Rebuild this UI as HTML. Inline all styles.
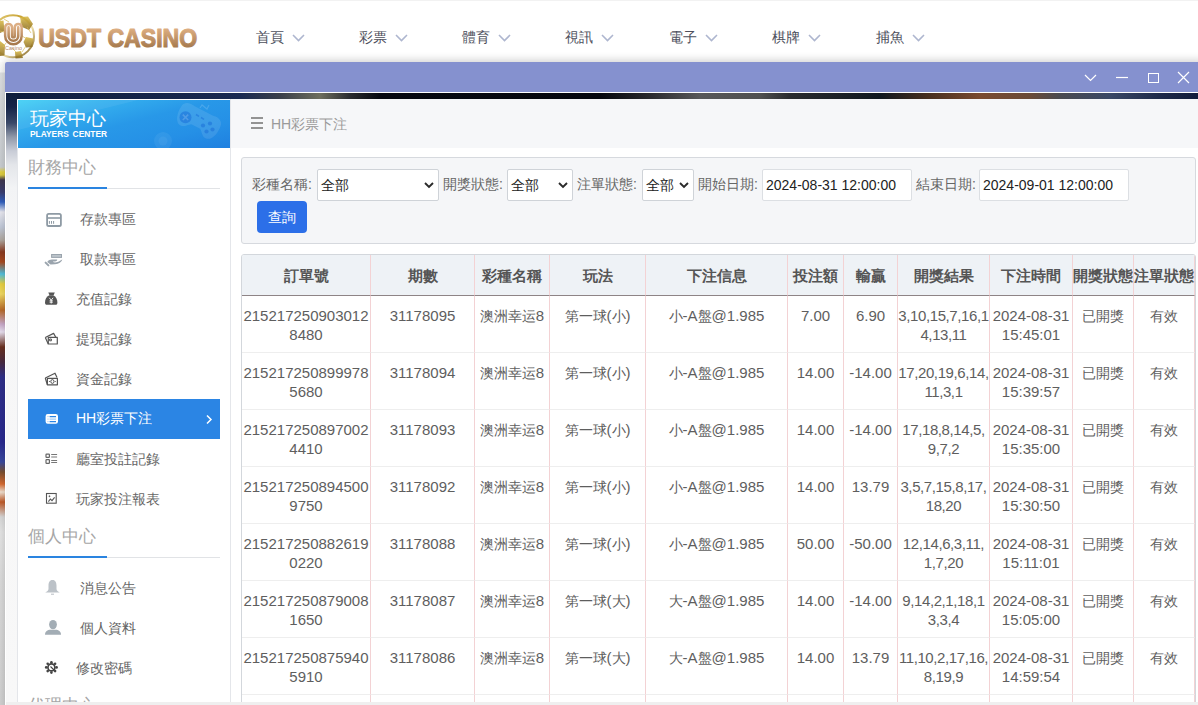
<!DOCTYPE html>
<html><head><meta charset="utf-8">
<style>
*{box-sizing:border-box;margin:0;padding:0}
html,body{width:1198px;height:705px;overflow:hidden;background:#fff;font-family:"Liberation Sans",sans-serif;color:#555}
.abs{position:absolute}
#topline{left:0;top:0;width:1198px;height:1px;background:#f2f2f2}
#logo-text-unused{left:37px;top:21px;font-weight:bold;font-size:24px;letter-spacing:-0.45px;line-height:32px;white-space:nowrap;
 background:linear-gradient(180deg,#dcae84 0%,#c99a6e 50%,#a97c50 100%);-webkit-background-clip:text;background-clip:text;color:transparent}
.nav{top:27px;font-size:14px;line-height:20px;color:#4d4f5c;white-space:nowrap}
.nav svg{position:absolute;left:36px;top:7px}
/* page left strip */
#pagebg{left:0;top:62px;width:6px;height:643px;background:linear-gradient(180deg,#fcfcfc 0,#f4f4f4 10px,#dcdee0 11px,#d0d3d6 60px,#c8ccd0 105px,#e0d040 110px,#d8c840 113px,#403850 118px,#3a3e70 130px,#3060c0 140px,#e8e8f0 150px,#c0c8d8 165px,#b0a8a0 178px,#8a3a20 190px,#a84a20 200px,#50c0e0 212px,#e8d040 222px,#f0d860 232px,#b86a28 248px,#c8a8c8 262px,#e8e0f0 270px,#6a3020 285px,#4a2a40 300px,#30308a 315px,#2a2a90 380px,#3a4aa0 400px,#7a5030 410px,#d86a30 422px,#f0e0d0 430px,#c05a28 440px,#d8d8d8 455px,#e4e4e4 470px,#dadada 520px,#d0d0d0 643px)}
#modal{left:5px;top:62px;width:1200px;height:650px;background:#fff;border-radius:2px 0 0 0;box-shadow:0 -2px 8px rgba(0,0,0,.18)}
#titlebar{left:0;top:0;width:1200px;height:30px;background:#8591cf;border-radius:2px 0 0 0}
#tbline{left:0;top:30px;width:1200px;height:1px;background:#fff}
#mbody{left:1px;top:31px;width:1199px;height:620px;background:#fff}
#strip{left:0;top:0;width:1199px;height:6px;background:linear-gradient(90deg,#0e1d3c 0px,#1a2a52 234px,#3a3f4a 274px,#6e6e5e 314px,#2a2c30 344px,#060810 374px,#05070e 594px,#2a2a2e 644px,#58585a 694px,#505050 754px,#2a2c30 784px,#101820 874px,#4a3020 924px,#7a4a30 974px,#6a4a38 1024px,#4a4a50 1054px,#3a4866 1104px,#1e2a4a 1154px,#101a38 1199px)}
#leftstrip{left:0;top:0;width:11px;height:620px;background:linear-gradient(180deg,#0e1d3c 0,#152448 14px,#3a4868 30px,#9098a8 44px,#c8ccd6 58px,#e4e6ea 72px,#f2f3f5 95px,#f6f6f7 140px,#f8f8f8 620px)}
#sidebar{left:17px;top:99px;width:214px;height:603px;background:#fff;border-left:1px solid #e4e6ea;border-right:1px solid #e4e6ea}
#sbhead{left:17px;top:99px;width:213px;height:49px;border-top:1px solid #fff;border-left:1px solid #fff;
 background:linear-gradient(165deg,#43d0f5 0%,#36b2ef 22%,#2898e8 50%,#2590e6 75%,#1f80e0 100%)}
.sbtitle{font-size:17px;color:#a6a6a6;line-height:20px;white-space:nowrap}
.sbline{height:1px;background:#e1e3e6}
.sbblue{height:2px;background:#2a84e0}
.mi{font-size:14px;color:#666;line-height:20px;white-space:nowrap}
#active{left:28px;top:399px;width:192px;height:40px;background:#2b85e4}
#crumb{left:231px;top:99px;width:967px;height:49px;background:#f6f7f9}
#filter{left:241px;top:157px;width:955px;height:87px;background:#f5f6f8;border:1px solid #d6d9de;border-radius:3px}
.lbl{top:175px;font-size:14px;line-height:18px;color:#666;white-space:nowrap}
.sel{top:169px;height:32px;background:#fff;border:1px solid #cfd3d8;border-radius:2px;font-size:14px;color:#222}
.sel span{position:absolute;left:3px;top:6px;line-height:18px}
.sel svg{position:absolute;top:12px}
.inp{top:169px;height:32px;background:#fff;border:1px solid #dcdfe3;border-radius:2px;font-size:14px;color:#222}
.inp span{position:absolute;left:3px;top:7px;line-height:16px;white-space:nowrap}
#btn{left:257px;top:201px;width:50px;height:32px;background:#2c6fe8;border-radius:4px;color:#fff;font-size:14px;line-height:32px;text-align:center}
#tablewrap{left:241px;top:254px;width:955px;height:460px;border:1px solid #d3d7dc;border-radius:3px;overflow:hidden;background:#fff}
table{border-collapse:separate;border-spacing:0;table-layout:fixed;width:953px;position:absolute;left:0;top:0}
th{height:41px;box-sizing:border-box;padding-top:2px !important;background:#eef2f6;font-size:15px;font-weight:bold;color:#555;text-align:center;border-right:1px solid #f3d2d4;border-bottom:1px solid #8e8486;white-space:nowrap;padding:0;overflow:visible}
.c{font-size:14px}
td:nth-child(8){letter-spacing:-0.4px}
td{height:57px;box-sizing:border-box;font-size:15px;color:#5e5e5e;text-align:center;vertical-align:top;border-right:1px solid #f3d2d4;border-bottom:1px solid #eeeeee;padding:10px 0 0 0;line-height:19px;letter-spacing:0;white-space:nowrap}
#bottombar{left:6px;top:702px;width:1192px;height:3px;background:#efefef}
</style></head><body>
<div id="topline" class="abs"></div>
<!-- logo coin -->
<svg class="abs" style="left:0;top:0" width="200" height="62" viewBox="0 0 200 62">
 <defs>
  <linearGradient id="gold" x1="0" y1="0" x2="1" y2="1"><stop offset="0" stop-color="#e8d58a"/><stop offset=".35" stop-color="#c8a232"/><stop offset=".6" stop-color="#f4e6b0"/><stop offset="1" stop-color="#7a5a18"/></linearGradient>
  <linearGradient id="gold2" x1="0" y1="0" x2="0" y2="1"><stop offset="0" stop-color="#d9b840"/><stop offset="1" stop-color="#8a6a1c"/></linearGradient>
  <linearGradient id="bronze" x1="0" y1="0" x2="0" y2="1"><stop offset="0" stop-color="#dcae84"/><stop offset="1" stop-color="#a87a4e"/></linearGradient>
  <linearGradient id="bronzeT" gradientUnits="userSpaceOnUse" x1="0" y1="29" x2="0" y2="47"><stop offset="0" stop-color="#dcad80"/><stop offset="1" stop-color="#a77b4f"/></linearGradient>
 </defs>
 <circle cx="13" cy="36.3" r="21" fill="#fff" stroke="url(#gold)" stroke-width="2"/>
 <g fill="url(#gold2)" opacity=".85">
  <path d="M20 17 L28 16.5 L33 24 L29 30 L22 27Z"/>
  <path d="M26 37 L33 38.5 L32.5 47 L26 47.5 L23.5 42Z"/>
  <path d="M0 41 L5 45 L4.5 55.5 L0 56Z"/>
  <path d="M15 52 L21 51 L23 58 L15.5 58.5Z"/>
  <path d="M0 21 L3.5 20.5 L4.5 31 L0 33Z"/>
 </g>
 <g fill="none" stroke="#d8bc5a" stroke-width=".9" opacity=".8">
  <path d="M4 19 L9 22 M22 18 L20 26 M27 27 L31 33 M27 39 L22 36 M26 46 L22 52 M16 52 L12 48 M3 47 L6 43 M0 31 L4 32"/>
 </g>
 <g fill="none" stroke-linecap="round">
  <path d="M8.6 27.4 V36 A4.8 4.8 0 0 0 18.2 36 V27.4" stroke="url(#bronze)" stroke-width="9.4"/>
  <path d="M8.6 27.4 V36 A4.8 4.8 0 0 0 18.2 36 V27.4" stroke="#fff" stroke-width="4.4"/>
  <path d="M8.6 27.4 V36 A4.8 4.8 0 0 0 18.2 36 V27.4" stroke="url(#bronze)" stroke-width="2.6"/>
 </g>
 <text x="5" y="50" font-size="4.6" fill="#b88c6a" font-family="Liberation Sans" textLength="17" lengthAdjust="spacingAndGlyphs">Casino</text>
 <text x="38.2" y="47" font-family="Liberation Sans" font-weight="bold" font-size="25" textLength="159" lengthAdjust="spacingAndGlyphs" fill="url(#bronzeT)" stroke="url(#bronzeT)" stroke-width="1.1" stroke-linejoin="round">USDT CASINO</text>
</svg>
<!-- nav -->
<div class="abs nav" style="left:256px">首頁<svg width="13" height="8" viewBox="0 0 13 8"><path d="M1 1 L6.5 6.5 L12 1" fill="none" stroke="#aeb6cf" stroke-width="1.6"/></svg></div>
<div class="abs nav" style="left:359px">彩票<svg width="13" height="8" viewBox="0 0 13 8"><path d="M1 1 L6.5 6.5 L12 1" fill="none" stroke="#aeb6cf" stroke-width="1.6"/></svg></div>
<div class="abs nav" style="left:462px">體育<svg width="13" height="8" viewBox="0 0 13 8"><path d="M1 1 L6.5 6.5 L12 1" fill="none" stroke="#aeb6cf" stroke-width="1.6"/></svg></div>
<div class="abs nav" style="left:565px">視訊<svg width="13" height="8" viewBox="0 0 13 8"><path d="M1 1 L6.5 6.5 L12 1" fill="none" stroke="#aeb6cf" stroke-width="1.6"/></svg></div>
<div class="abs nav" style="left:669px">電子<svg width="13" height="8" viewBox="0 0 13 8"><path d="M1 1 L6.5 6.5 L12 1" fill="none" stroke="#aeb6cf" stroke-width="1.6"/></svg></div>
<div class="abs nav" style="left:772px">棋牌<svg width="13" height="8" viewBox="0 0 13 8"><path d="M1 1 L6.5 6.5 L12 1" fill="none" stroke="#aeb6cf" stroke-width="1.6"/></svg></div>
<div class="abs nav" style="left:876px">捕魚<svg width="13" height="8" viewBox="0 0 13 8"><path d="M1 1 L6.5 6.5 L12 1" fill="none" stroke="#aeb6cf" stroke-width="1.6"/></svg></div>

<div id="pagebg" class="abs"></div>
<div id="modal" class="abs">
 <div id="titlebar" class="abs"></div>
 <div id="tbline" class="abs"></div>
 <div id="mbody" class="abs">
  <div id="strip" class="abs"></div>
  <div id="leftstrip" class="abs"></div>
 </div>
 <svg class="abs" style="left:1075px;top:8px" width="120" height="16" viewBox="0 0 120 16">
  <path d="M5 5 L10.5 10.5 L16 5" fill="none" stroke="#fff" stroke-width="1.2"/>
  <path d="M36 7.5 H48" stroke="#fff" stroke-width="1.2"/>
  <rect x="68.5" y="3.5" width="10" height="9" fill="none" stroke="#fff" stroke-width="1" shape-rendering="crispEdges"/>
  <path d="M98 2 L109 13 M109 2 L98 13" stroke="#fff" stroke-width="1.2"/>
 </svg>
</div>

<div id="sidebar" class="abs"></div>
<div id="sbhead" class="abs">
 <svg class="abs" style="left:0;top:0" width="213" height="48" viewBox="0 0 213 48">
  <path d="M0 0 H120 L0 30Z" fill="#fff" opacity=".06"/>
  <g transform="rotate(27 180 22)">
   <path d="M158 16 C158 10 164 8 170 9.5 L190 9.5 C196 8 202 10 202 16 C203 24 200 33 194 33 C190 33 188 29 185 27 L175 27 C172 29 170 33 166 33 C160 33 157 24 158 16Z" fill="#fff" opacity=".1"/>
  </g>
  <circle cx="167.5" cy="17.3" r="6" fill="#1a6fd8" opacity=".55"/>
  <path d="M164.8 14.6 L170.2 20 M170.2 14.6 L164.8 20" stroke="#fff" stroke-opacity=".18" stroke-width="1.6"/>
  <path d="M178 14.5 L181 16.3 M183 17.5 L186 19.3" stroke="#1a6fd8" stroke-opacity=".55" stroke-width="1.5"/>
  <g fill="#1a6fd8" opacity=".55"><circle cx="185" cy="25.5" r="2.1"/><circle cx="192" cy="23.5" r="2.1"/><circle cx="188.5" cy="31.5" r="2.1"/><circle cx="194.5" cy="29.5" r="2.1"/></g>
  <path d="M182 8 L184 5 L189 9 L191 5" fill="none" stroke="#fff" stroke-opacity=".15" stroke-width="1.2"/>
  <circle cx="145" cy="41" r="9" fill="#fff" opacity=".06"/>
  <circle cx="145" cy="41" r="4.5" fill="#fff" opacity=".05"/>
 </svg>
 <div class="abs" style="left:12px;top:8px;font-size:19px;line-height:22px;color:#fff;white-space:nowrap">玩家中心</div>
 <div class="abs" style="left:12px;top:29px;font-size:8.4px;line-height:10px;color:#fff;font-weight:bold;word-spacing:1.5px;white-space:nowrap">PLAYERS CENTER</div>
</div>
</div>

<!-- sidebar content -->
<div class="abs sbtitle" style="left:28px;top:158px">財務中心</div>
<div class="abs sbline" style="left:28px;top:188px;width:192px"></div>
<div class="abs sbblue" style="left:28px;top:187px;width:79px"></div>

<div class="abs mi" style="left:80px;top:209px">存款專區</div>
<div class="abs mi" style="left:80px;top:249px">取款專區</div>
<div class="abs mi" style="left:76px;top:289px">充值記錄</div>
<div class="abs mi" style="left:76px;top:329px">提現記錄</div>
<div class="abs mi" style="left:76px;top:369px">資金記錄</div>
<div id="active" class="abs"></div>
<div class="abs mi" style="left:76px;top:408px;color:#fff">HH彩票下注</div>
<svg class="abs" style="left:205px;top:414px" width="8" height="11" viewBox="0 0 8 11"><path d="M2 1.5 L6 5.5 L2 9.5" fill="none" stroke="#fff" stroke-width="1.5"/></svg>
<div class="abs mi" style="left:76px;top:449px">廳室投註記錄</div>
<div class="abs mi" style="left:76px;top:489px">玩家投注報表</div>

<div class="abs sbtitle" style="left:28px;top:527px">個人中心</div>
<div class="abs sbline" style="left:28px;top:557px;width:192px"></div>
<div class="abs sbblue" style="left:28px;top:556px;width:79px"></div>
<div class="abs mi" style="left:80px;top:578px">消息公告</div>
<div class="abs mi" style="left:80px;top:618px">個人資料</div>
<div class="abs mi" style="left:76px;top:658px">修改密碼</div>
<div class="abs sbtitle" style="left:28px;top:696px">代理中心</div>

<!-- sidebar icons -->
<svg class="abs" style="left:40px;top:200px" width="30" height="480" viewBox="40 200 30 480">
 <!-- card -->
 <g fill="none" stroke="#8e9aa4">
  <rect x="47.1" y="213.9" width="13.8" height="12.1" rx="1.6" stroke-width="1.8"/>
  <path d="M47 218 H61" stroke-width="1.6"/>
  <path d="M49.4 221 V223.8 M51.5 221 V223.8 M53.6 221 V223.8" stroke-width="1"/>
 </g>
 <!-- hand -->
 <g fill="#9aa4ad">
  <rect x="51.6" y="254.5" width="9.9" height="2.9" fill="#bcc4ca" stroke="#9aa4ad" stroke-width="1"/>
  <path d="M45.6 262.6 L48.4 265.4" stroke="#9aa4ad" stroke-width="2" stroke-linecap="round"/>
  <path d="M47.2 262 C48.5 260.3 50 259.6 52 259.6 L57.2 259.6 C57.4 261 56 261.6 53.5 261.6 L52.8 261.7 C53.8 262.5 55.5 262.6 57.5 262 C59.5 261.3 60.8 260 62.4 259.4 C61.5 261.8 59 263.8 55 264.3 L50.5 264.4 Z"/>
 </g>
 <!-- money bag -->
 <g fill="#555">
  <path d="M48.3 292.4 L54.8 292.4 L53.6 295.3 L49.5 295.3 Z"/>
  <path d="M49.3 295.2 C46.3 296.5 45 299.5 45 302.5 C45 304.3 45.6 304.8 47 304.8 L55.4 304.8 C56.8 304.8 57.4 304.3 57.4 302.5 C57.4 299.5 56 296.5 53.2 295.2 Z"/>
  <path d="M49.3 297.8 L51.2 300.2 L53.1 297.8 M51.2 300.2 V303.5 M49.6 300.8 H52.8 M49.6 302.2 H52.8" fill="none" stroke="#fff" stroke-width=".9"/>
 </g>
 <!-- wallet -->
 <g fill="none" stroke="#555" stroke-width="1.2" stroke-linejoin="round">
  <path d="M45.3 337.5 L53.6 333.4 L55.8 337.2"/>
  <path d="M45.3 337.5 L48.3 344"/>
  <rect x="48.3" y="337.4" width="9" height="6.6"/>
  <rect x="49.6" y="339" width="1.8" height="1.8" stroke-width="1"/>
 </g>
 <!-- money stack -->
 <g fill="none" stroke="#555" stroke-width="1.2" stroke-linejoin="round">
  <path d="M45.3 378 L55 373.2 L57 377.5"/>
  <path d="M45.3 378 L47.4 384.8"/>
  <rect x="47.4" y="378.3" width="10" height="6.5"/>
  <ellipse cx="52.4" cy="381.5" rx="1.6" ry="1.9" stroke-width="1"/>
 </g>
 <circle cx="49.5" cy="381.5" r=".6" fill="#555"/><circle cx="55.3" cy="381.5" r=".6" fill="#555"/>
 <!-- list active -->
 <rect x="46.3" y="414.8" width="11" height="8.2" rx="1.5" fill="#fff" stroke="#fff" stroke-width="1.4"/>
 <path d="M49.6 416.6 H56 M49.6 421.6 H56" stroke="#2b85e4" stroke-width="1.1"/>
 <path d="M49.6 419.1 H56" stroke="#8fbff0" stroke-width="1"/>
 <path d="M47.5 416.6 H48.5 M47.5 419.1 H48.5 M47.5 421.6 H48.5" stroke="#8fbff0" stroke-width="1"/>
 <!-- list ul -->
 <g fill="none" stroke="#666">
  <rect x="46" y="454.2" width="3.4" height="3.2" rx=".6" stroke-width="1.2"/>
  <rect x="46" y="459.6" width="3.4" height="3.7" rx=".6" stroke-width="1.2"/>
  <path d="M51.2 454.5 H57.1 M51.2 457 H57.1 M51.2 460.5 H57.1 M51.2 462.5 H57.1" stroke="#777" stroke-width="1"/>
 </g>
 <!-- chart -->
 <g fill="none" stroke="#555">
  <rect x="46.5" y="493.5" width="9.7" height="9.7" stroke-width="1.1"/>
  <path d="M48.4 501.6 L50.4 499 L52 500.6 L54.6 497.4" stroke-width="1.1"/>
  <path d="M49.5 495.4 V497.2 M48.6 496.3 H50.4" stroke-width=".8"/>
 </g>
 <!-- bell -->
 <path d="M52.5 580 C49.5 580 48.5 582.5 48.5 585.5 L48.5 589 C48.5 590.5 47 591.7 45.2 592.6 L59.8 592.6 C58 591.7 56.5 590.5 56.5 589 L56.5 585.5 C56.5 582.5 55.5 580 52.5 580Z" fill="#bcc2c8"/>
 <path d="M51 594.2 H54" stroke="#bcc2c8" stroke-width="1.1"/>
 <!-- user -->
 <ellipse cx="53" cy="624.6" rx="3.9" ry="4.7" fill="#a3adb5"/>
 <path d="M45 634.8 C45 631.5 47.5 629.8 50.5 629.8 L55.5 629.8 C58.5 629.8 61 631.5 61 634.8Z" fill="#a3adb5"/>
 <!-- gear -->
 <g fill="#444">
  <circle cx="51.4" cy="667.4" r="4.3"/>
  <g transform="translate(51.4 667.4)">
   <circle cx="0" cy="-5.2" r="1.3"/><circle cx="0" cy="5.2" r="1.3"/><circle cx="-5.2" cy="0" r="1.3"/><circle cx="5.2" cy="0" r="1.3"/>
   <circle cx="3.7" cy="3.7" r="1.3"/><circle cx="-3.7" cy="3.7" r="1.3"/><circle cx="3.7" cy="-3.7" r="1.3"/><circle cx="-3.7" cy="-3.7" r="1.3"/>
  </g>
 </g>
 <circle cx="51.4" cy="667.4" r="2.6" fill="#fff"/>
 <path d="M50.5 666.5 L54 670" stroke="#444" stroke-width="1.1"/>
</svg>

<!-- content -->
<div id="crumb" class="abs">
 <svg class="abs" style="left:20px;top:17px" width="13" height="13" viewBox="0 0 13 13"><path d="M0 2 H12 M0 7 H12 M0 12 H12" stroke="#939393" stroke-width="2"/></svg>
 <div class="abs" style="left:40px;top:15px;font-size:14px;line-height:20px;color:#9a9a9a;white-space:nowrap">HH彩票下注</div>
</div>

<div id="filter" class="abs"></div>
<div class="abs lbl" style="left:252px">彩種名稱:</div>
<div class="abs sel" style="left:317px;width:122px"><span>全部</span><svg style="left:106px" width="10" height="7" viewBox="0 0 10 7"><path d="M1 1 L5 5 L9 1" fill="none" stroke="#2a2a2a" stroke-width="1.9"/></svg></div>
<div class="abs lbl" style="left:443px">開獎狀態:</div>
<div class="abs sel" style="left:507px;width:66px"><span>全部</span><svg style="left:50px" width="10" height="7" viewBox="0 0 10 7"><path d="M1 1 L5 5 L9 1" fill="none" stroke="#2a2a2a" stroke-width="1.9"/></svg></div>
<div class="abs lbl" style="left:577px">注單狀態:</div>
<div class="abs sel" style="left:642px;width:52px"><span>全部</span><svg style="left:36px" width="10" height="7" viewBox="0 0 10 7"><path d="M1 1 L5 5 L9 1" fill="none" stroke="#2a2a2a" stroke-width="1.9"/></svg></div>
<div class="abs lbl" style="left:698px">開始日期:</div>
<div class="abs inp" style="left:762px;width:150px"><span>2024-08-31 12:00:00</span></div>
<div class="abs lbl" style="left:916px">結束日期:</div>
<div class="abs inp" style="left:979px;width:150px"><span>2024-09-01 12:00:00</span></div>
<div id="btn" class="abs">查詢</div>

<div id="tablewrap" class="abs">
<table>
<colgroup><col style="width:129px"><col style="width:104px"><col style="width:75px"><col style="width:96px"><col style="width:142px"><col style="width:56px"><col style="width:54px"><col style="width:92px"><col style="width:83px"><col style="width:61px"><col style="width:61px"></colgroup>
<tr><th>訂單號</th><th>期數</th><th>彩種名稱</th><th>玩法</th><th>下注信息</th><th>投注額</th><th>輸贏</th><th>開獎結果</th><th>下注時間</th><th>開獎狀態</th><th>注單狀態</th></tr>
<tr><td>215217250903012<br>8480</td><td>31178095</td><td><span class="c">澳洲幸运</span>8</td><td><span class="c">第一球</span>(<span class="c">小</span>)</td><td><span class="c">小</span>-A<span class="c">盤</span>@1.985</td><td>7.00</td><td>6.90</td><td>3,10,15,7,16,1<br>4,13,11</td><td>2024-08-31<br>15:45:01</td><td><span class="c">已開獎</span></td><td><span class="c">有效</span></td></tr>
<tr><td>215217250899978<br>5680</td><td>31178094</td><td><span class="c">澳洲幸运</span>8</td><td><span class="c">第一球</span>(<span class="c">小</span>)</td><td><span class="c">小</span>-A<span class="c">盤</span>@1.985</td><td>14.00</td><td>-14.00</td><td>17,20,19,6,14,<br>11,3,1</td><td>2024-08-31<br>15:39:57</td><td><span class="c">已開獎</span></td><td><span class="c">有效</span></td></tr>
<tr><td>215217250897002<br>4410</td><td>31178093</td><td><span class="c">澳洲幸运</span>8</td><td><span class="c">第一球</span>(<span class="c">小</span>)</td><td><span class="c">小</span>-A<span class="c">盤</span>@1.985</td><td>14.00</td><td>-14.00</td><td>17,18,8,14,5,<br>9,7,2</td><td>2024-08-31<br>15:35:00</td><td><span class="c">已開獎</span></td><td><span class="c">有效</span></td></tr>
<tr><td>215217250894500<br>9750</td><td>31178092</td><td><span class="c">澳洲幸运</span>8</td><td><span class="c">第一球</span>(<span class="c">小</span>)</td><td><span class="c">小</span>-A<span class="c">盤</span>@1.985</td><td>14.00</td><td>13.79</td><td>3,5,7,15,8,17,<br>18,20</td><td>2024-08-31<br>15:30:50</td><td><span class="c">已開獎</span></td><td><span class="c">有效</span></td></tr>
<tr><td>215217250882619<br>0220</td><td>31178088</td><td><span class="c">澳洲幸运</span>8</td><td><span class="c">第一球</span>(<span class="c">小</span>)</td><td><span class="c">小</span>-A<span class="c">盤</span>@1.985</td><td>50.00</td><td>-50.00</td><td>12,14,6,3,11,<br>1,7,20</td><td>2024-08-31<br>15:11:01</td><td><span class="c">已開獎</span></td><td><span class="c">有效</span></td></tr>
<tr><td>215217250879008<br>1650</td><td>31178087</td><td><span class="c">澳洲幸运</span>8</td><td><span class="c">第一球</span>(<span class="c">大</span>)</td><td><span class="c">大</span>-A<span class="c">盤</span>@1.985</td><td>14.00</td><td>-14.00</td><td>9,14,2,1,18,1<br>3,3,4</td><td>2024-08-31<br>15:05:00</td><td><span class="c">已開獎</span></td><td><span class="c">有效</span></td></tr>
<tr><td>215217250875940<br>5910</td><td>31178086</td><td><span class="c">澳洲幸运</span>8</td><td><span class="c">第一球</span>(<span class="c">大</span>)</td><td><span class="c">大</span>-A<span class="c">盤</span>@1.985</td><td>14.00</td><td>13.79</td><td>11,10,2,17,16,<br>8,19,9</td><td>2024-08-31<br>14:59:54</td><td><span class="c">已開獎</span></td><td><span class="c">有效</span></td></tr>
<tr><td>&nbsp;</td><td></td><td></td><td></td><td></td><td></td><td></td><td></td><td></td><td></td><td></td></tr>
</table>
</div>
<div id="bottombar" class="abs"></div>
</body></html>
